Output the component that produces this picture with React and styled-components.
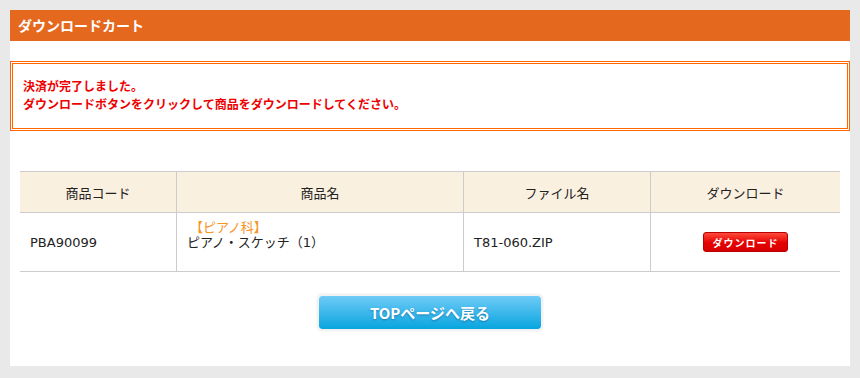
import React from "react";
import styled, { createGlobalStyle } from "styled-components";

const GlobalStyle = createGlobalStyle`
  html, body {
    margin: 0;
    padding: 0;
    background: #e9e9e9;
  }
  body {
    font-family: "DejaVu Sans", "Noto Sans CJK JP", sans-serif;
    color: #222;
  }
`;

const items = [
  {
    code: "PBA90099",
    category: "【ピアノ科】",
    name: "ピアノ・スケッチ（1）",
    file: "T81-060.ZIP",
  },
];

export default function App() {
  return (
    <>
      <GlobalStyle />
      <Page>
        <Panel>
          <Heading>ダウンロードカート</Heading>
          <Notice>
            決済が完了しました。
            <br />
            ダウンロードボタンをクリックして商品をダウンロードしてください。
          </Notice>
          <CartTable>
            <thead>
              <tr>
                <Th $w={156}>商品コード</Th>
                <Th $w={286}>商品名</Th>
                <Th $w={186}>ファイル名</Th>
                <Th>ダウンロード</Th>
              </tr>
            </thead>
            <tbody>
              {items.map((it) => (
                <tr key={it.code}>
                  <Td>{it.code}</Td>
                  <NameCell>
                    <Category>{it.category}</Category>
                    <br />
                    {it.name}
                  </NameCell>
                  <Td>{it.file}</Td>
                  <Td $center>
                    <DownloadButton>ダウンロード</DownloadButton>
                  </Td>
                </tr>
              ))}
            </tbody>
          </CartTable>
          <Footer>
            <TopButton>TOPページへ戻る</TopButton>
          </Footer>
        </Panel>
      </Page>
    </>
  );
}

const Page = styled.div`
  padding: 10px 10px 0;
  height: 378px;
  box-sizing: border-box;
`;

const Panel = styled.div`
  background: #fff;
  height: 356px;
`;

const Heading = styled.h2`
  margin: 0;
  height: 31px;
  line-height: 31px;
  padding: 0 8px;
  background: #e5681f;
  color: #fff;
  font-size: 14px;
  font-weight: bold;
  font-family: "Noto Sans CJK JP", sans-serif;
`;

const Notice = styled.p`
  box-sizing: border-box;
  margin: 20px 0 0;
  height: 70px;
  border: 1px solid #ff6600;
  box-shadow: inset 0 0 0 1px #fff, inset 0 0 0 2px #ff6600;
  padding: 15px 12px 0;
  color: #ee0000;
  font-size: 12px;
  font-weight: bold;
  line-height: 18px;
  font-family: "Noto Sans CJK JP", sans-serif;
`;

const CartTable = styled.table`
  margin: 40px 10px 0;
  width: calc(100% - 20px);
  border-collapse: collapse;
  font-size: 13px;
`;

const Th = styled.th`
  width: ${(p) => (p.$w ? `${p.$w}px` : "auto")};
  height: 40px;
  background: #faf0e0;
  border: 1px solid #cccccc;
  font-weight: normal;
  text-align: center;
  padding: 0;
  &:first-child {
    border-left: none;
  }
  &:last-child {
    border-right: none;
  }
`;

const Td = styled.td`
  height: 58px;
  border: 1px solid #cccccc;
  padding: 0 10px;
  text-align: ${(p) => (p.$center ? "center" : "left")};
  vertical-align: middle;
  line-height: 15px;
  &:first-child {
    border-left: none;
  }
  &:last-child {
    border-right: none;
  }
`;

const NameCell = styled(Td)`
  height: 43px;
  padding-bottom: 15px;
`;

const Category = styled.span`
  color: #f7931e;
  margin-left: 3px;
`;

const DownloadButton = styled.button`
  width: 85px;
  height: 20px;
  padding: 0;
  border: 1px solid #b80000;
  border-radius: 3px;
  background: linear-gradient(#ff4a3a, #e40000 55%, #d80000);
  color: #fff;
  font-size: 10px;
  font-weight: bold;
  letter-spacing: 1px;
  font-family: "Noto Sans CJK JP", sans-serif;
  cursor: pointer;
`;

const Footer = styled.div`
  display: flex;
  justify-content: center;
  padding-top: 22px;
`;

const TopButton = styled.button`
  width: 226px;
  height: 37px;
  border: 2px solid #f2f2f2;
  border-radius: 5px;
  background: linear-gradient(#70cbf7, #08a5df);
  background-clip: padding-box;
  color: #fff;
  font-size: 15px;
  font-weight: bold;
  font-family: "Noto Sans CJK JP", sans-serif;
  text-shadow: 0 1px 2px rgba(0, 60, 110, 0.45);
  box-shadow: 0 0 2px rgba(0, 0, 0, 0.1);
  cursor: pointer;
`;
